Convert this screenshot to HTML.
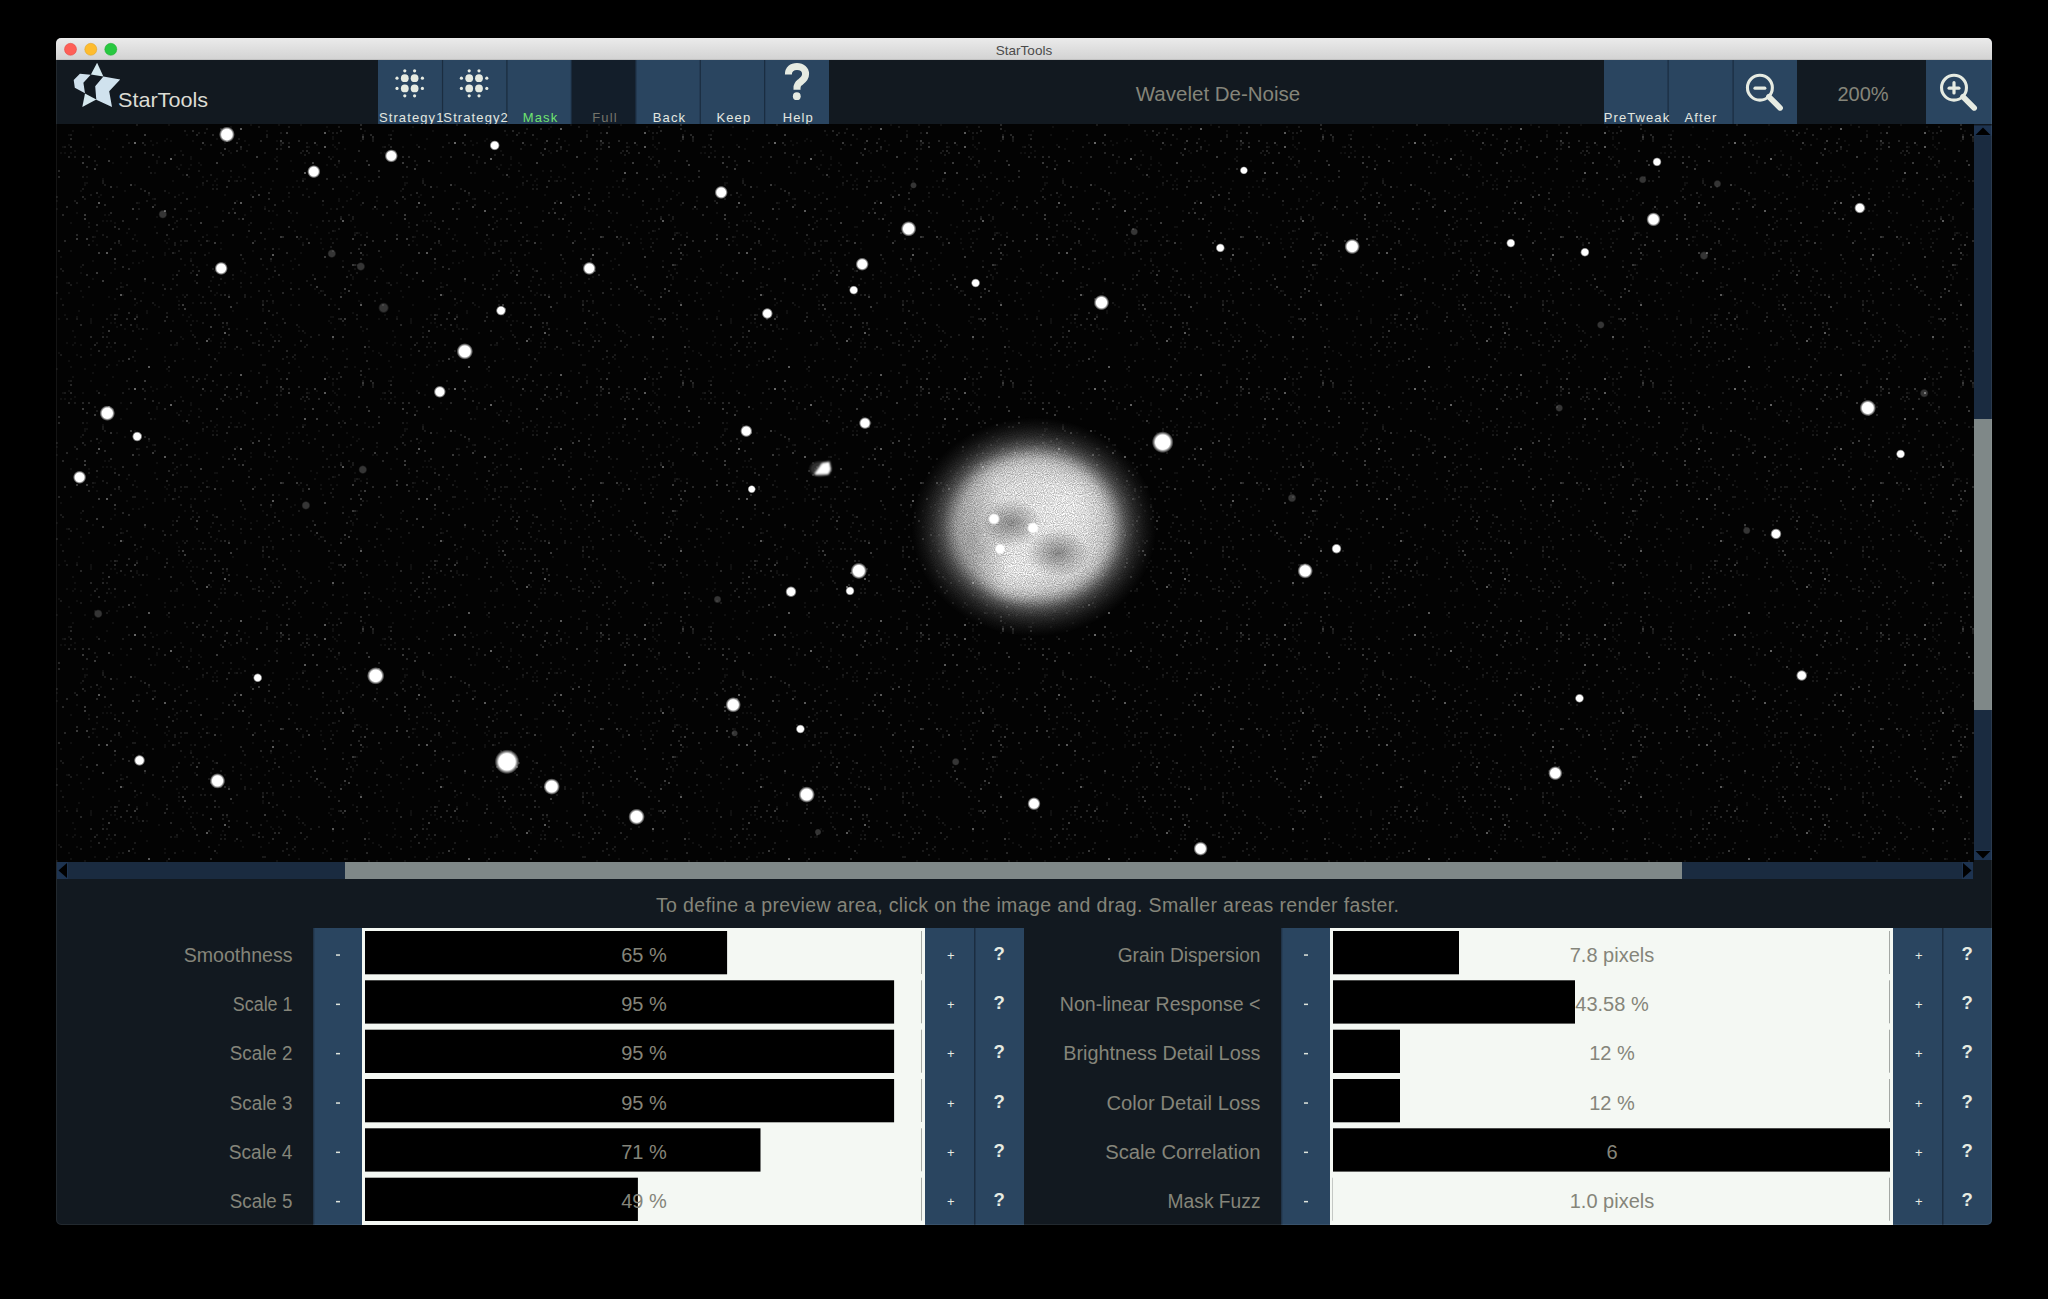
<!DOCTYPE html>
<html><head><meta charset="utf-8">
<style>
html,body{margin:0;padding:0;background:#000;width:2048px;height:1299px;overflow:hidden;}
svg{display:block;font-family:"Liberation Sans",sans-serif;}
</style></head><body>
<svg width="2048" height="1299" viewBox="0 0 2048 1299">
<defs>
<clipPath id="wc"><rect x="56" y="38" width="1936" height="1187" rx="5" ry="5"/></clipPath>
<clipPath id="ic"><rect x="56" y="124" width="1918" height="738"/></clipPath>
<linearGradient id="tg" x1="0" y1="0" x2="0" y2="1"><stop offset="0" stop-color="#ebebeb"/><stop offset="1" stop-color="#d2d2d2"/></linearGradient>
<radialGradient id="neb" cx="0.5" cy="0.5" r="0.5">
<stop offset="0" stop-color="#e4e4e4"/>
<stop offset="0.42" stop-color="#dcdcdc"/>
<stop offset="0.55" stop-color="#cccccc"/>
<stop offset="0.62" stop-color="#bcbcbc" stop-opacity="0.96"/>
<stop offset="0.68" stop-color="#a8a8a8" stop-opacity="0.8"/>
<stop offset="0.75" stop-color="#949494" stop-opacity="0.52"/>
<stop offset="0.83" stop-color="#808080" stop-opacity="0.3"/>
<stop offset="0.91" stop-color="#707070" stop-opacity="0.14"/>
<stop offset="1" stop-color="#606060" stop-opacity="0"/>
</radialGradient>
<radialGradient id="halo" cx="0.5" cy="0.5" r="0.5"><stop offset="0.6" stop-color="#fff" stop-opacity="0.2"/><stop offset="1" stop-color="#fff" stop-opacity="0"/></radialGradient>
<radialGradient id="eye" cx="0.5" cy="0.5" r="0.5">
<stop offset="0" stop-color="#000" stop-opacity="0.38"/>
<stop offset="1" stop-color="#000" stop-opacity="0"/>
</radialGradient>
<radialGradient id="hot" cx="0.5" cy="0.5" r="0.5">
<stop offset="0" stop-color="#fff" stop-opacity="0.35"/>
<stop offset="1" stop-color="#fff" stop-opacity="0"/>
</radialGradient>
<filter id="grain" x="0" y="0" width="100%" height="100%" color-interpolation-filters="sRGB">
<feTurbulence type="fractalNoise" baseFrequency="0.9" numOctaves="1" seed="7" result="n"/>
<feComponentTransfer in="n" result="nc"><feFuncR type="linear" slope="2.2" intercept="-0.6"/></feComponentTransfer>
<feColorMatrix in="nc" type="matrix" values="1 0 0 0 0  1 0 0 0 0  1 0 0 0 0  0 0 0 0 1" result="g"/>
<feComposite in="SourceGraphic" in2="g" operator="arithmetic" k1="0.38" k2="0.78" k3="0" k4="0"/>
</filter>
<filter id="bl" x="-20%" y="-20%" width="140%" height="140%"><feGaussianBlur stdDeviation="0.9"/></filter>
<filter id="speck" x="0" y="0" width="100%" height="100%" color-interpolation-filters="sRGB">
<feTurbulence type="fractalNoise" baseFrequency="0.5" numOctaves="1" seed="11" result="n"/>
<feColorMatrix in="n" type="matrix" values="0 0 0 0 1  0 0 0 0 1  0 0 0 0 1  9 0 0 0 -5.5"/>
</filter>
<radialGradient id="st" cx="0.5" cy="0.5" r="0.5">
<stop offset="0" stop-color="#fff"/>
<stop offset="0.66" stop-color="#fff"/>
<stop offset="0.82" stop-color="#fff" stop-opacity="0.5"/>
<stop offset="1" stop-color="#fff" stop-opacity="0"/>
</radialGradient>
</defs>
<rect x="0" y="0" width="2048" height="1299" fill="#000"/>
<g clip-path="url(#wc)">
<rect x="56" y="38" width="1936" height="1187" fill="#121920"/>

<rect x="56" y="38" width="1936" height="22" fill="url(#tg)"/>
<rect x="56" y="59.5" width="1936" height="0.5" fill="#b0b0b0"/>
<circle cx="70.5" cy="49.3" r="6" fill="#fe5f57" stroke="#e1453f" stroke-width="0.5"/>
<circle cx="90.8" cy="49.3" r="6" fill="#febc2e" stroke="#dfa023" stroke-width="0.5"/>
<circle cx="110.8" cy="49.3" r="6" fill="#28c840" stroke="#1dac2c" stroke-width="0.5"/>
<text x="1024" y="54.5" font-size="13.5" fill="#4b4b4b" text-anchor="middle">StarTools</text>
<rect x="56" y="60" width="1936" height="64" fill="#121920"/>
<polygon points="97.1,62.7 103.4,76.4 90.9,74.6" fill="#d5e8ee"/>
<polygon points="73.7,79.9 79.9,73.7 90.7,74.7 83.4,82.7 85,93.2 74.8,87.7" fill="#cfe0ec"/>
<polygon points="103.4,76.6 120.2,79.5 109.2,91.25 112,106.9 96.3,99.8 95.2,86.2" fill="#d0e2ee"/>
<polygon points="85,93.4 96.3,99.6 82.3,106.9" fill="#d5e8ee"/>
<text x="118" y="106.5" font-size="21" fill="#dcdcd4" textLength="90" lengthAdjust="spacingAndGlyphs">StarTools</text>
<rect x="378.00" y="60" width="64.43" height="64" fill="#2a4560"/>
<rect x="442.43" y="60" width="64.43" height="64" fill="#2a4560"/>
<rect x="506.86" y="60" width="64.43" height="64" fill="#2a4560"/>
<rect x="571.29" y="60" width="64.43" height="64" fill="#131e2a"/>
<rect x="635.72" y="60" width="64.43" height="64" fill="#2a4560"/>
<rect x="700.15" y="60" width="64.43" height="64" fill="#2a4560"/>
<rect x="764.58" y="60" width="64.43" height="64" fill="#2a4560"/>
<rect x="441.93" y="60" width="1.2" height="64" fill="#1b2d40"/>
<rect x="506.36" y="60" width="1.2" height="64" fill="#1b2d40"/>
<rect x="570.79" y="60" width="1.2" height="64" fill="#1b2d40"/>
<rect x="635.22" y="60" width="1.2" height="64" fill="#1b2d40"/>
<rect x="699.65" y="60" width="1.2" height="64" fill="#1b2d40"/>
<rect x="764.08" y="60" width="1.2" height="64" fill="#1b2d40"/>
<text x="411.72" y="122" font-size="13" fill="#e4e8e0" text-anchor="middle" letter-spacing="1.1">Strategy1</text>
<text x="476.14" y="122" font-size="13" fill="#e4e8e0" text-anchor="middle" letter-spacing="1.1">Strategy2</text>
<text x="540.58" y="122" font-size="13" fill="#6fe46f" text-anchor="middle" letter-spacing="1.1">Mask</text>
<text x="605.00" y="122" font-size="13" fill="#74746a" text-anchor="middle" letter-spacing="1.1">Full</text>
<text x="669.44" y="122" font-size="13" fill="#e4e8e0" text-anchor="middle" letter-spacing="1.1">Back</text>
<text x="733.87" y="122" font-size="13" fill="#e4e8e0" text-anchor="middle" letter-spacing="1.1">Keep</text>
<text x="798.30" y="122" font-size="13" fill="#e4e8e0" text-anchor="middle" letter-spacing="1.1">Help</text>
<circle cx="404.80" cy="78.20" r="3.9" fill="#e6ebe2"/><circle cx="404.80" cy="88.40" r="3.9" fill="#e6ebe2"/><circle cx="414.60" cy="78.20" r="3.9" fill="#e6ebe2"/><circle cx="414.60" cy="88.40" r="3.9" fill="#e6ebe2"/><circle cx="397.00" cy="78.20" r="1.6" fill="#e6ebe2"/><circle cx="397.00" cy="88.40" r="1.6" fill="#e6ebe2"/><circle cx="422.40" cy="78.20" r="1.6" fill="#e6ebe2"/><circle cx="422.40" cy="88.40" r="1.6" fill="#e6ebe2"/><circle cx="404.80" cy="70.80" r="1.6" fill="#e6ebe2"/><circle cx="404.80" cy="95.80" r="1.6" fill="#e6ebe2"/><circle cx="414.60" cy="70.80" r="1.6" fill="#e6ebe2"/><circle cx="414.60" cy="95.80" r="1.6" fill="#e6ebe2"/>
<circle cx="469.20" cy="78.20" r="3.9" fill="#e6ebe2"/><circle cx="469.20" cy="88.40" r="3.9" fill="#e6ebe2"/><circle cx="479.00" cy="78.20" r="3.9" fill="#e6ebe2"/><circle cx="479.00" cy="88.40" r="3.9" fill="#e6ebe2"/><circle cx="461.40" cy="78.20" r="1.6" fill="#e6ebe2"/><circle cx="461.40" cy="88.40" r="1.6" fill="#e6ebe2"/><circle cx="486.80" cy="78.20" r="1.6" fill="#e6ebe2"/><circle cx="486.80" cy="88.40" r="1.6" fill="#e6ebe2"/><circle cx="469.20" cy="70.80" r="1.6" fill="#e6ebe2"/><circle cx="469.20" cy="95.80" r="1.6" fill="#e6ebe2"/><circle cx="479.00" cy="70.80" r="1.6" fill="#e6ebe2"/><circle cx="479.00" cy="95.80" r="1.6" fill="#e6ebe2"/>
<path d="M788.4,74.5 C788.4,69 792,66.4 797,66.4 C802,66.4 805.6,69.5 805.6,74 C805.6,78.5 802.5,80.5 800,82.3 C797.8,84 797,85.5 797,88 L797,89.8" fill="none" stroke="#e6ebe2" stroke-width="7"/>
<circle cx="796.8" cy="96.2" r="3.9" fill="#e6ebe2"/>
<text x="1218" y="100.8" font-size="20.5" fill="#85857a" text-anchor="middle">Wavelet De-Noise</text>
<rect x="1604" y="60" width="64" height="64" fill="#2a4560"/>
<rect x="1668" y="60" width="65" height="64" fill="#2a4560"/>
<rect x="1733" y="60" width="64" height="64" fill="#2a4560"/>
<rect x="1797" y="60" width="129" height="64" fill="#121a22"/>
<rect x="1926" y="60" width="66" height="64" fill="#2a4560"/>
<rect x="1667.5" y="60" width="1.2" height="64" fill="#1b2d40"/>
<rect x="1732.5" y="60" width="1.2" height="64" fill="#1b2d40"/>
<text x="1637" y="122" font-size="13" fill="#e4e8e0" text-anchor="middle" letter-spacing="1.1">PreTweak</text>
<text x="1701" y="122" font-size="13" fill="#e4e8e0" text-anchor="middle" letter-spacing="1.1">After</text>
<text x="1863" y="101" font-size="20" fill="#85857a" text-anchor="middle">200%</text>
<circle cx="1759.9" cy="87.7" r="12.45" fill="none" stroke="#e6ebe2" stroke-width="3.1"/><line x1="1768.9" y1="96.7" x2="1780.1000000000001" y2="107.9" stroke="#e6ebe2" stroke-width="5.6" stroke-linecap="round"/><line x1="1755.0" y1="88.2" x2="1764.8000000000002" y2="88.2" stroke="#e6ebe2" stroke-width="3.2" stroke-linecap="round"/>
<circle cx="1954" cy="87.7" r="12.45" fill="none" stroke="#e6ebe2" stroke-width="3.1"/><line x1="1963" y1="96.7" x2="1974.2" y2="107.9" stroke="#e6ebe2" stroke-width="5.6" stroke-linecap="round"/><line x1="1949.1" y1="88.2" x2="1958.9" y2="88.2" stroke="#e6ebe2" stroke-width="3.2" stroke-linecap="round"/><line x1="1954" y1="82.7" x2="1954" y2="92.9" stroke="#e6ebe2" stroke-width="3.2" stroke-linecap="round"/>
<rect x="56" y="124" width="1918" height="738" fill="#030303"/>
<g clip-path="url(#ic)">
<g filter="url(#grain)">
<ellipse cx="1034" cy="527" rx="123" ry="110" fill="url(#neb)"/>
<ellipse cx="1068" cy="505" rx="40" ry="35" fill="url(#hot)"/>
<ellipse cx="1015" cy="570" rx="40" ry="35" fill="url(#hot)"/>
<ellipse cx="1012" cy="523" rx="30" ry="24" fill="url(#eye)"/>
<ellipse cx="972" cy="540" rx="40" ry="75" fill="url(#eye)" opacity="0.55"/>
<ellipse cx="1058" cy="553" rx="32" ry="24" fill="url(#eye)"/>
</g>
<defs><pattern id="nzp" x="56" y="124" width="320" height="246" patternUnits="userSpaceOnUse"><path fill="#fff" fill-opacity="0.05" d="M56 6h2v2h-2zM140 62h2v2h-2zM114 34h2v2h-2zM52 172h2v2h-2zM278 22h2v2h-2zM302 108h2v2h-2zM16 6h2v2h-2zM46 54h2v2h-2zM118 128h2v2h-2zM308 6h2v2h-2zM286 50h2v2h-2zM278 106h2v2h-2zM112 114h2v2h-2zM300 70h2v2h-2zM2 194h2v2h-2zM80 178h2v2h-2zM216 86h2v2h-2zM142 38h2v2h-2zM110 244h2v2h-2zM172 26h2v2h-2zM46 96h2v2h-2zM48 90h2v2h-2zM176 154h2v2h-2zM134 206h2v2h-2zM22 186h2v2h-2zM234 136h2v2h-2zM62 236h2v2h-2zM192 20h2v2h-2zM282 74h2v2h-2zM316 226h2v2h-2zM184 146h2v2h-2zM98 180h2v2h-2zM34 10h2v2h-2zM116 196h2v2h-2zM148 20h2v2h-2zM118 220h2v2h-2zM50 96h2v2h-2zM142 116h2v2h-2zM186 40h2v2h-2zM188 90h2v2h-2zM106 170h2v2h-2zM136 178h2v2h-2zM36 154h2v2h-2zM86 136h2v2h-2zM124 40h2v2h-2zM236 96h2v2h-2zM138 236h2v2h-2zM284 56h2v2h-2zM166 214h2v2h-2zM28 58h2v2h-2zM16 206h2v2h-2zM160 102h2v2h-2zM136 16h2v2h-2zM108 232h2v2h-2zM290 224h2v2h-2zM160 54h2v2h-2zM254 100h2v2h-2zM234 36h2v2h-2zM134 34h2v2h-2zM126 190h2v2h-2zM286 136h2v2h-2zM134 190h2v2h-2zM298 108h2v2h-2zM298 102h2v2h-2zM184 56h2v2h-2zM70 130h2v2h-2zM252 22h2v2h-2zM24 220h2v2h-2zM56 38h2v2h-2zM80 202h2v2h-2zM216 152h2v2h-2zM32 98h2v2h-2zM194 152h2v2h-2zM238 134h2v2h-2zM128 140h2v2h-2zM4 174h2v2h-2zM58 174h2v2h-2zM274 192h2v2h-2zM136 196h2v2h-2zM174 28h2v2h-2zM150 110h2v2h-2zM80 116h2v2h-2zM0 244h2v2h-2zM134 128h2v2h-2zM90 128h2v2h-2zM54 222h2v2h-2zM152 214h2v2h-2zM258 154h2v2h-2zM100 38h2v2h-2zM190 194h2v2h-2zM82 138h2v2h-2zM270 234h2v2h-2zM0 152h2v2h-2zM164 124h2v2h-2zM8 28h2v2h-2zM184 224h2v2h-2zM156 60h2v2h-2zM28 60h2v2h-2zM290 242h2v2h-2zM40 20h2v2h-2zM248 208h2v2h-2zM34 194h2v2h-2zM272 196h2v2h-2zM64 32h2v2h-2zM242 242h2v2h-2zM280 42h2v2h-2zM134 134h2v2h-2zM310 108h2v2h-2zM108 236h2v2h-2zM276 192h2v2h-2zM102 182h2v2h-2zM158 102h2v2h-2zM190 112h2v2h-2zM264 114h2v2h-2zM60 62h2v2h-2zM114 16h2v2h-2zM172 4h2v2h-2zM300 140h2v2h-2zM116 150h2v2h-2zM112 0h2v2h-2zM36 180h2v2h-2zM30 58h2v2h-2zM34 230h2v2h-2zM16 220h2v2h-2zM168 18h2v2h-2zM262 60h2v2h-2zM142 170h2v2h-2zM248 54h2v2h-2zM276 32h2v2h-2zM292 146h2v2h-2zM242 62h2v2h-2zM242 206h2v2h-2zM208 48h2v2h-2zM48 24h2v2h-2zM220 90h2v2h-2zM216 104h2v2h-2zM238 220h2v2h-2zM26 172h2v2h-2zM50 14h2v2h-2zM206 186h2v2h-2zM172 204h2v2h-2zM54 62h2v2h-2zM98 48h2v2h-2zM274 114h2v2h-2zM70 108h2v2h-2zM92 70h2v2h-2zM236 62h2v2h-2zM38 112h2v2h-2zM280 24h2v2h-2zM24 166h2v2h-2zM276 214h2v2h-2zM6 22h2v2h-2zM120 42h2v2h-2zM208 124h2v2h-2zM246 54h2v2h-2zM204 230h2v2h-2zM30 42h2v2h-2zM194 0h2v2h-2zM198 66h2v2h-2zM232 72h2v2h-2zM216 178h2v2h-2zM284 168h2v2h-2zM248 38h2v2h-2zM96 74h2v2h-2zM110 14h2v2h-2zM296 188h2v2h-2zM276 14h2v2h-2zM160 14h2v2h-2zM24 148h2v2h-2zM244 128h2v2h-2zM270 40h2v2h-2zM28 244h2v2h-2zM260 20h2v2h-2zM94 16h2v2h-2zM304 16h2v2h-2zM120 102h2v2h-2zM60 240h2v2h-2zM290 62h2v2h-2zM296 152h2v2h-2zM20 158h2v2h-2zM40 106h2v2h-2zM298 144h2v2h-2zM266 80h2v2h-2zM132 52h2v2h-2zM160 60h2v2h-2zM134 100h2v2h-2zM66 170h2v2h-2zM152 116h2v2h-2zM160 236h2v2h-2zM36 2h2v2h-2zM234 158h2v2h-2zM288 24h2v2h-2zM36 136h2v2h-2zM108 128h2v2h-2zM134 32h2v2h-2zM178 224h2v2h-2zM34 224h2v2h-2zM124 94h2v2h-2zM144 40h2v2h-2zM224 212h2v2h-2zM278 180h2v2h-2zM154 156h2v2h-2zM270 2h2v2h-2zM282 76h2v2h-2zM52 240h2v2h-2zM68 66h2v2h-2zM58 226h2v2h-2zM54 190h2v2h-2zM282 38h2v2h-2zM138 72h2v2h-2zM308 52h2v2h-2zM174 52h2v2h-2zM134 128h2v2h-2zM250 64h2v2h-2zM26 22h2v2h-2zM216 212h2v2h-2zM140 10h2v2h-2zM0 84h2v2h-2zM66 162h2v2h-2zM134 40h2v2h-2zM226 140h2v2h-2zM218 142h2v2h-2zM4 28h2v2h-2zM38 240h2v2h-2zM76 138h2v2h-2zM18 212h2v2h-2zM188 148h2v2h-2zM282 36h2v2h-2zM220 32h2v2h-2zM20 78h2v2h-2zM186 230h2v2h-2zM20 230h2v2h-2zM182 52h2v2h-2zM126 170h2v2h-2zM52 90h2v2h-2zM286 226h2v2h-2zM208 158h2v2h-2zM78 236h2v2h-2zM120 220h2v2h-2zM82 204h2v2h-2zM90 224h2v2h-2zM210 6h2v2h-2zM90 188h2v2h-2zM170 200h2v2h-2zM210 204h2v2h-2zM126 68h2v2h-2zM80 200h2v2h-2zM54 96h2v2h-2zM18 218h2v2h-2zM240 56h2v2h-2zM102 208h2v2h-2zM234 88h2v2h-2zM156 210h2v2h-2zM116 56h2v2h-2zM12 168h2v2h-2zM98 102h2v2h-2zM168 70h2v2h-2zM34 196h2v2h-2zM142 88h2v2h-2zM260 102h2v2h-2zM274 84h2v2h-2zM14 28h2v2h-2zM132 44h2v2h-2zM296 66h2v2h-2zM18 26h2v2h-2zM304 110h2v2h-2zM176 186h2v2h-2zM160 110h2v2h-2zM310 130h2v2h-2zM58 98h2v2h-2zM294 48h2v2h-2zM130 10h2v2h-2zM222 0h2v2h-2zM266 236h2v2h-2zM274 174h2v2h-2zM100 92h2v2h-2zM220 16h2v2h-2zM168 158h2v2h-2zM160 168h2v2h-2zM62 184h2v2h-2zM152 128h2v2h-2zM158 170h2v2h-2zM208 82h2v2h-2zM206 178h2v2h-2zM150 140h2v2h-2zM64 48h2v2h-2zM214 170h2v2h-2zM194 172h2v2h-2zM88 156h2v2h-2zM290 76h2v2h-2zM206 140h2v2h-2zM0 76h2v2h-2zM146 52h2v2h-2zM220 200h2v2h-2zM296 154h2v2h-2zM164 118h2v2h-2zM226 112h2v2h-2zM108 130h2v2h-2zM242 202h2v2h-2zM86 168h2v2h-2zM42 72h2v2h-2zM262 168h2v2h-2zM316 84h2v2h-2zM46 208h2v2h-2zM120 172h2v2h-2zM158 56h2v2h-2zM100 36h2v2h-2zM12 10h2v2h-2zM124 120h2v2h-2zM312 216h2v2h-2zM36 116h2v2h-2zM212 226h2v2h-2zM294 48h2v2h-2zM196 126h2v2h-2zM204 62h2v2h-2zM74 166h2v2h-2zM2 228h2v2h-2zM54 198h2v2h-2zM216 56h2v2h-2zM90 204h2v2h-2zM264 118h2v2h-2zM24 142h2v2h-2zM126 234h2v2h-2zM62 116h2v2h-2zM68 204h2v2h-2zM236 170h2v2h-2zM270 142h2v2h-2zM304 80h2v2h-2zM226 156h2v2h-2zM258 108h2v2h-2zM280 114h2v2h-2zM80 190h2v2h-2zM242 114h2v2h-2zM132 192h2v2h-2zM126 214h2v2h-2zM140 196h2v2h-2zM266 124h2v2h-2zM122 70h2v2h-2zM224 18h2v2h-2zM146 60h2v2h-2zM138 84h2v2h-2zM162 228h2v2h-2zM276 20h2v2h-2zM70 38h2v2h-2zM118 98h2v2h-2zM78 180h2v2h-2zM108 16h2v2h-2zM212 104h2v2h-2zM168 138h2v2h-2zM238 106h2v2h-2zM30 52h2v2h-2zM214 98h2v2h-2zM298 242h2v2h-2zM10 218h2v2h-2zM294 96h2v2h-2zM244 0h2v2h-2zM180 76h2v2h-2zM198 218h2v2h-2zM214 136h2v2h-2zM278 204h2v2h-2zM308 228h2v2h-2zM112 124h2v2h-2zM112 68h2v2h-2zM222 124h2v2h-2zM14 98h2v2h-2zM172 170h2v2h-2zM206 184h2v2h-2zM84 214h2v2h-2zM238 234h2v2h-2zM64 158h2v2h-2zM272 6h2v2h-2zM200 150h2v2h-2zM288 168h2v2h-2zM12 20h2v2h-2zM218 34h2v2h-2zM236 46h2v2h-2zM24 66h2v2h-2zM194 82h2v2h-2zM108 116h2v2h-2zM166 86h2v2h-2zM194 70h2v2h-2zM214 64h2v2h-2zM40 120h2v2h-2zM8 190h2v2h-2zM276 12h2v2h-2zM178 56h2v2h-2zM34 198h2v2h-2zM20 192h2v2h-2zM14 242h2v2h-2zM126 50h2v2h-2zM10 158h2v2h-2zM78 60h2v2h-2zM64 120h2v2h-2zM58 144h2v2h-2zM110 118h2v2h-2zM130 196h2v2h-2zM188 42h2v2h-2zM310 154h2v2h-2zM58 198h2v2h-2zM82 78h2v2h-2zM54 148h2v2h-2zM12 236h2v2h-2zM158 146h2v2h-2zM192 100h2v2h-2zM100 18h2v2h-2zM302 176h2v2h-2zM124 26h2v2h-2zM154 216h2v2h-2zM306 206h2v2h-2zM60 202h2v2h-2zM288 200h2v2h-2zM20 88h2v2h-2zM272 108h2v2h-2zM188 16h2v2h-2zM258 164h2v2h-2zM174 2h2v2h-2zM214 210h2v2h-2zM250 26h2v2h-2zM220 244h2v2h-2zM184 162h2v2h-2zM234 180h2v2h-2zM78 110h2v2h-2zM90 186h2v2h-2zM266 166h2v2h-2zM138 156h2v2h-2zM274 198h2v2h-2zM246 118h2v2h-2zM222 210h2v2h-2zM302 68h2v2h-2zM164 218h2v2h-2zM124 212h2v2h-2zM44 70h2v2h-2zM230 62h2v2h-2zM236 144h2v2h-2zM312 170h2v2h-2zM194 86h2v2h-2zM14 126h2v2h-2zM166 46h2v2h-2zM248 54h2v2h-2zM180 204h2v2h-2zM132 86h2v2h-2zM142 224h2v2h-2zM304 178h2v2h-2zM140 142h2v2h-2zM4 132h2v2h-2zM96 20h2v2h-2zM122 184h2v2h-2zM208 124h2v2h-2zM284 194h2v2h-2zM122 176h2v2h-2z"/><path fill="#fff" fill-opacity="0.09" d="M242 164h2v2h-2zM250 114h2v2h-2zM8 22h2v2h-2zM150 56h2v2h-2zM206 176h2v2h-2zM124 78h2v2h-2zM296 94h2v2h-2zM242 140h2v2h-2zM270 88h2v2h-2zM216 190h2v2h-2zM280 84h2v2h-2zM180 178h2v2h-2zM232 68h2v2h-2zM156 64h2v2h-2zM118 30h2v2h-2zM98 80h2v2h-2zM60 190h2v2h-2zM274 242h2v2h-2zM94 48h2v2h-2zM110 188h2v2h-2zM246 70h2v2h-2zM300 194h2v2h-2zM268 152h2v2h-2zM144 24h2v2h-2zM98 74h2v2h-2zM116 92h2v2h-2zM90 76h2v2h-2zM6 180h2v2h-2zM272 32h2v2h-2zM140 10h2v2h-2zM26 140h2v2h-2zM148 178h2v2h-2zM64 162h2v2h-2zM250 26h2v2h-2zM6 146h2v2h-2zM144 120h2v2h-2zM244 112h2v2h-2zM174 46h2v2h-2zM26 64h2v2h-2zM244 28h2v2h-2zM32 102h2v2h-2zM250 18h2v2h-2zM294 160h2v2h-2zM26 38h2v2h-2zM76 206h2v2h-2zM288 242h2v2h-2zM154 20h2v2h-2zM126 30h2v2h-2zM284 194h2v2h-2zM212 154h2v2h-2zM304 202h2v2h-2zM316 56h2v2h-2zM266 96h2v2h-2zM230 232h2v2h-2zM226 76h2v2h-2zM300 108h2v2h-2zM156 144h2v2h-2zM316 14h2v2h-2zM312 244h2v2h-2zM50 242h2v2h-2zM106 160h2v2h-2zM108 66h2v2h-2zM40 40h2v2h-2zM122 44h2v2h-2zM282 18h2v2h-2zM80 0h2v2h-2zM208 114h2v2h-2zM304 120h2v2h-2zM148 8h2v2h-2zM118 72h2v2h-2zM144 178h2v2h-2zM232 18h2v2h-2zM118 236h2v2h-2zM134 200h2v2h-2zM300 168h2v2h-2zM100 108h2v2h-2zM58 138h2v2h-2zM114 164h2v2h-2zM76 232h2v2h-2zM136 210h2v2h-2zM72 18h2v2h-2zM30 42h2v2h-2zM156 152h2v2h-2zM290 234h2v2h-2zM146 112h2v2h-2zM62 118h2v2h-2zM154 178h2v2h-2zM206 240h2v2h-2zM138 128h2v2h-2zM276 126h2v2h-2zM224 20h2v2h-2zM306 10h2v2h-2zM220 188h2v2h-2zM164 154h2v2h-2zM128 6h2v2h-2zM46 58h2v2h-2zM294 150h2v2h-2zM10 194h2v2h-2zM136 146h2v2h-2zM20 194h2v2h-2zM88 120h2v2h-2zM264 166h2v2h-2zM226 234h2v2h-2zM142 46h2v2h-2zM298 110h2v2h-2zM250 22h2v2h-2zM240 88h2v2h-2zM208 84h2v2h-2zM164 170h2v2h-2zM52 218h2v2h-2zM82 84h2v2h-2zM210 176h2v2h-2zM252 72h2v2h-2zM204 208h2v2h-2zM280 8h2v2h-2zM232 22h2v2h-2zM160 64h2v2h-2zM164 28h2v2h-2zM206 220h2v2h-2zM262 210h2v2h-2zM0 168h2v2h-2zM276 118h2v2h-2zM210 12h2v2h-2zM96 132h2v2h-2zM184 158h2v2h-2zM254 160h2v2h-2zM226 194h2v2h-2zM26 52h2v2h-2zM136 140h2v2h-2zM66 236h2v2h-2zM146 112h2v2h-2zM248 30h2v2h-2zM14 160h2v2h-2zM310 204h2v2h-2zM122 180h2v2h-2zM80 78h2v2h-2zM282 2h2v2h-2zM282 104h2v2h-2zM46 56h2v2h-2zM58 118h2v2h-2zM60 164h2v2h-2zM78 126h2v2h-2zM148 130h2v2h-2zM138 106h2v2h-2zM246 120h2v2h-2zM124 116h2v2h-2zM282 36h2v2h-2zM196 48h2v2h-2zM306 130h2v2h-2zM68 220h2v2h-2zM34 70h2v2h-2zM212 86h2v2h-2zM258 68h2v2h-2zM0 72h2v2h-2zM152 214h2v2h-2zM300 148h2v2h-2zM250 220h2v2h-2zM76 114h2v2h-2zM274 122h2v2h-2zM176 84h2v2h-2zM282 194h2v2h-2zM278 96h2v2h-2zM232 238h2v2h-2zM164 222h2v2h-2zM96 178h2v2h-2zM122 146h2v2h-2zM196 58h2v2h-2zM210 10h2v2h-2zM162 190h2v2h-2zM242 180h2v2h-2zM194 98h2v2h-2zM76 126h2v2h-2zM18 32h2v2h-2zM256 150h2v2h-2zM168 222h2v2h-2zM50 222h2v2h-2zM224 24h2v2h-2zM268 232h2v2h-2zM232 2h2v2h-2zM72 104h2v2h-2zM78 18h2v2h-2zM240 200h2v2h-2zM134 86h2v2h-2zM318 176h2v2h-2zM202 166h2v2h-2zM40 218h2v2h-2zM168 218h2v2h-2zM272 96h2v2h-2zM162 160h2v2h-2zM248 222h2v2h-2zM276 8h2v2h-2zM316 16h2v2h-2zM120 160h2v2h-2zM146 58h2v2h-2zM46 110h2v2h-2zM50 194h2v2h-2zM50 112h2v2h-2zM84 176h2v2h-2zM152 230h2v2h-2zM14 10h2v2h-2zM166 202h2v2h-2zM28 74h2v2h-2zM182 94h2v2h-2zM220 36h2v2h-2zM124 134h2v2h-2zM210 144h2v2h-2zM92 42h2v2h-2zM88 20h2v2h-2zM312 222h2v2h-2zM194 158h2v2h-2zM122 126h2v2h-2zM298 36h2v2h-2zM118 118h2v2h-2zM130 116h2v2h-2zM130 170h2v2h-2zM4 230h2v2h-2zM238 230h2v2h-2zM146 172h2v2h-2zM278 40h2v2h-2zM36 112h2v2h-2zM176 150h2v2h-2zM152 162h2v2h-2zM216 176h2v2h-2zM128 116h2v2h-2zM154 50h2v2h-2zM196 218h2v2h-2zM246 26h2v2h-2zM120 96h2v2h-2zM292 90h2v2h-2zM294 74h2v2h-2zM150 4h2v2h-2zM202 70h2v2h-2zM4 144h2v2h-2zM24 232h2v2h-2zM310 190h2v2h-2zM254 212h2v2h-2zM146 198h2v2h-2zM116 154h2v2h-2zM180 56h2v2h-2zM96 158h2v2h-2zM128 172h2v2h-2zM70 160h2v2h-2zM48 230h2v2h-2zM20 78h2v2h-2zM224 8h2v2h-2zM296 92h2v2h-2zM66 22h2v2h-2zM150 82h2v2h-2zM212 44h2v2h-2zM102 32h2v2h-2zM276 224h2v2h-2zM186 134h2v2h-2zM256 232h2v2h-2zM138 212h2v2h-2zM84 64h2v2h-2zM246 206h2v2h-2zM150 190h2v2h-2zM172 204h2v2h-2zM58 118h2v2h-2zM38 36h2v2h-2zM114 220h2v2h-2zM202 216h2v2h-2zM284 92h2v2h-2zM46 202h2v2h-2zM202 2h2v2h-2zM134 136h2v2h-2zM62 116h2v2h-2zM188 172h2v2h-2zM134 148h2v2h-2zM194 210h2v2h-2zM190 26h2v2h-2zM118 120h2v2h-2zM12 158h2v2h-2zM286 82h2v2h-2zM312 56h2v2h-2zM32 162h2v2h-2zM236 232h2v2h-2zM154 166h2v2h-2zM208 28h2v2h-2zM70 10h2v2h-2zM18 76h2v2h-2zM252 28h2v2h-2zM48 60h2v2h-2zM274 34h2v2h-2zM198 116h2v2h-2zM188 170h2v2h-2zM276 106h2v2h-2zM300 190h2v2h-2zM78 226h2v2h-2zM212 166h2v2h-2zM50 212h2v2h-2zM250 156h2v2h-2zM208 240h2v2h-2zM142 8h2v2h-2zM188 54h2v2h-2zM226 112h2v2h-2zM120 218h2v2h-2zM184 24h2v2h-2zM188 138h2v2h-2zM182 14h2v2h-2z"/><path fill="#fff" fill-opacity="0.14" d="M202 70h2v2h-2zM96 30h2v2h-2zM232 22h2v2h-2zM108 164h2v2h-2zM304 4h2v2h-2zM24 200h2v2h-2zM170 62h2v2h-2zM64 200h2v2h-2zM288 52h2v2h-2zM34 212h2v2h-2zM282 52h2v2h-2zM300 54h2v2h-2zM118 84h2v2h-2zM74 200h2v2h-2zM304 0h2v2h-2zM140 218h2v2h-2zM74 32h2v2h-2zM276 64h2v2h-2zM88 28h2v2h-2zM12 32h2v2h-2zM6 90h2v2h-2zM120 150h2v2h-2zM164 4h2v2h-2zM88 66h2v2h-2zM26 32h2v2h-2zM214 134h2v2h-2zM58 190h2v2h-2zM32 120h2v2h-2zM228 198h2v2h-2zM184 130h2v2h-2zM302 26h2v2h-2zM230 128h2v2h-2zM112 242h2v2h-2zM314 10h2v2h-2zM266 76h2v2h-2zM234 164h2v2h-2zM14 14h2v2h-2zM244 216h2v2h-2zM204 108h2v2h-2zM54 124h2v2h-2zM226 18h2v2h-2zM40 82h2v2h-2zM310 36h2v2h-2zM32 32h2v2h-2zM140 158h2v2h-2zM298 140h2v2h-2zM166 96h2v2h-2zM304 134h2v2h-2zM150 116h2v2h-2zM258 154h2v2h-2zM220 24h2v2h-2zM58 218h2v2h-2zM282 184h2v2h-2zM110 110h2v2h-2zM230 226h2v2h-2zM116 104h2v2h-2zM172 210h2v2h-2zM232 102h2v2h-2zM212 186h2v2h-2zM48 80h2v2h-2zM218 80h2v2h-2zM130 94h2v2h-2zM78 174h2v2h-2zM242 16h2v2h-2zM46 212h2v2h-2zM42 22h2v2h-2zM220 24h2v2h-2zM190 206h2v2h-2zM66 142h2v2h-2zM30 150h2v2h-2zM286 142h2v2h-2zM168 170h2v2h-2zM62 104h2v2h-2zM180 222h2v2h-2zM216 222h2v2h-2zM26 72h2v2h-2zM306 78h2v2h-2zM180 26h2v2h-2zM294 128h2v2h-2zM108 38h2v2h-2zM246 56h2v2h-2zM54 88h2v2h-2zM284 94h2v2h-2zM58 194h2v2h-2zM142 146h2v2h-2zM114 206h2v2h-2zM218 216h2v2h-2zM286 196h2v2h-2zM318 156h2v2h-2zM284 6h2v2h-2zM310 236h2v2h-2zM136 6h2v2h-2zM92 68h2v2h-2zM158 234h2v2h-2zM172 88h2v2h-2zM2 46h2v2h-2zM72 144h2v2h-2zM204 16h2v2h-2zM72 188h2v2h-2zM14 22h2v2h-2zM270 54h2v2h-2zM192 106h2v2h-2zM232 86h2v2h-2zM80 94h2v2h-2zM158 184h2v2h-2zM166 198h2v2h-2zM290 152h2v2h-2zM42 226h2v2h-2zM26 38h2v2h-2zM80 192h2v2h-2zM316 12h2v2h-2zM40 68h2v2h-2zM226 168h2v2h-2zM216 124h2v2h-2zM310 112h2v2h-2zM212 68h2v2h-2zM110 192h2v2h-2zM262 28h2v2h-2zM176 110h2v2h-2zM56 72h2v2h-2zM302 124h2v2h-2zM268 170h2v2h-2zM156 10h2v2h-2zM112 100h2v2h-2zM306 14h2v2h-2zM2 52h2v2h-2zM154 242h2v2h-2zM108 196h2v2h-2zM70 194h2v2h-2zM130 74h2v2h-2zM166 30h2v2h-2zM2 126h2v2h-2zM220 44h2v2h-2zM66 96h2v2h-2zM272 180h2v2h-2zM116 128h2v2h-2zM286 212h2v2h-2zM180 18h2v2h-2zM202 220h2v2h-2zM20 110h2v2h-2zM8 116h2v2h-2zM38 220h2v2h-2zM160 146h2v2h-2zM218 146h2v2h-2zM206 180h2v2h-2zM212 74h2v2h-2zM58 102h2v2h-2zM10 82h2v2h-2zM86 204h2v2h-2zM316 116h2v2h-2zM184 22h2v2h-2zM222 216h2v2h-2zM54 62h2v2h-2zM222 150h2v2h-2zM204 134h2v2h-2zM40 100h2v2h-2zM158 190h2v2h-2zM172 56h2v2h-2zM170 198h2v2h-2zM86 18h2v2h-2z"/><path fill="#fff" fill-opacity="0.22" d="M260 162h2v2h-2zM58 134h2v2h-2zM260 48h2v2h-2zM178 88h2v2h-2zM74 60h2v2h-2zM52 36h2v2h-2zM130 50h2v2h-2zM88 154h2v2h-2zM78 194h2v2h-2zM38 44h2v2h-2zM252 118h2v2h-2zM288 194h2v2h-2zM296 114h2v2h-2zM288 164h2v2h-2zM318 82h2v2h-2zM160 38h2v2h-2zM224 16h2v2h-2zM240 112h2v2h-2zM154 202h2v2h-2zM140 150h2v2h-2zM28 90h2v2h-2zM258 18h2v2h-2zM158 118h2v2h-2zM230 8h2v2h-2zM28 94h2v2h-2zM146 18h2v2h-2zM46 156h2v2h-2zM304 128h2v2h-2zM196 118h2v2h-2zM296 140h2v2h-2zM20 114h2v2h-2zM292 166h2v2h-2zM96 82h2v2h-2zM308 120h2v2h-2zM256 38h2v2h-2zM30 114h2v2h-2zM52 206h2v2h-2zM174 182h2v2h-2zM42 128h2v2h-2zM88 10h2v2h-2zM126 180h2v2h-2zM224 112h2v2h-2zM268 132h2v2h-2zM312 40h2v2h-2zM186 94h2v2h-2zM144 98h2v2h-2zM208 198h2v2h-2zM172 172h2v2h-2zM306 12h2v2h-2zM170 16h2v2h-2zM168 24h2v2h-2zM284 172h2v2h-2zM196 72h2v2h-2zM128 184h2v2h-2zM308 222h2v2h-2zM76 84h2v2h-2zM40 148h2v2h-2zM72 234h2v2h-2zM178 78h2v2h-2zM200 32h2v2h-2z"/><path fill="#fff" fill-opacity="0.34" d="M304 180h2v2h-2zM42 78h2v2h-2zM286 96h2v2h-2zM168 208h2v2h-2zM64 170h2v2h-2zM268 22h2v2h-2zM216 130h2v2h-2zM184 4h2v2h-2zM184 78h2v2h-2zM92 242h2v2h-2zM108 86h2v2h-2zM248 48h2v2h-2zM114 34h2v2h-2zM78 18h2v2h-2zM150 216h2v2h-2zM50 128h2v2h-2zM276 212h2v2h-2zM268 8h2v2h-2z"/></pattern></defs>
<rect x="56" y="124" width="1918" height="738" fill="url(#nzp)"/>
<circle cx="383.6" cy="307.8" r="5.5" fill="url(#st)" fill-opacity="0.2"/>
<circle cx="162.8" cy="214.3" r="4.5" fill="url(#st)" fill-opacity="0.2"/>
<circle cx="331.8" cy="253.6" r="4.5" fill="url(#st)" fill-opacity="0.2"/>
<circle cx="360.8" cy="266.5" r="4.5" fill="url(#st)" fill-opacity="0.2"/>
<circle cx="362.8" cy="469.6" r="4.5" fill="url(#st)" fill-opacity="0.2"/>
<circle cx="913.5" cy="185.3" r="3.5" fill="url(#st)" fill-opacity="0.2"/>
<circle cx="1134.2" cy="231.7" r="4.0" fill="url(#st)" fill-opacity="0.2"/>
<circle cx="1642.7" cy="179.6" r="4.0" fill="url(#st)" fill-opacity="0.2"/>
<circle cx="1717.4" cy="183.8" r="4.0" fill="url(#st)" fill-opacity="0.2"/>
<circle cx="1924.2" cy="393.2" r="4.5" fill="url(#st)" fill-opacity="0.2"/>
<circle cx="1704" cy="255.6" r="4.5" fill="url(#st)" fill-opacity="0.2"/>
<circle cx="1559.2" cy="408" r="4.0" fill="url(#st)" fill-opacity="0.2"/>
<circle cx="98.2" cy="613.7" r="4.5" fill="url(#st)" fill-opacity="0.2"/>
<circle cx="305.9" cy="505.4" r="4.5" fill="url(#st)" fill-opacity="0.2"/>
<circle cx="717.5" cy="599.4" r="4.0" fill="url(#st)" fill-opacity="0.2"/>
<circle cx="955.7" cy="761.8" r="4.0" fill="url(#st)" fill-opacity="0.2"/>
<circle cx="818" cy="832" r="3.5" fill="url(#st)" fill-opacity="0.2"/>
<circle cx="734.6" cy="733.3" r="3.5" fill="url(#st)" fill-opacity="0.2"/>
<circle cx="1292" cy="498" r="4.5" fill="url(#st)" fill-opacity="0.2"/>
<circle cx="1746.7" cy="530.5" r="4.0" fill="url(#st)" fill-opacity="0.2"/>
<circle cx="1600.8" cy="324.9" r="4.0" fill="url(#st)" fill-opacity="0.2"/>
<circle cx="226.9" cy="134.5" r="8.0" fill="url(#st)"/>
<circle cx="313.8" cy="171.6" r="6.7" fill="url(#st)"/>
<circle cx="391.3" cy="155.9" r="6.7" fill="url(#st)"/>
<circle cx="494.7" cy="145.4" r="5.2" fill="url(#st)"/>
<circle cx="221.2" cy="268.4" r="6.7" fill="url(#st)"/>
<circle cx="501" cy="310.6" r="5.2" fill="url(#st)"/>
<circle cx="464.8" cy="351.4" r="8.3" fill="url(#st)"/>
<circle cx="439.8" cy="391.8" r="6.2" fill="url(#st)"/>
<circle cx="107.3" cy="413.2" r="7.8" fill="url(#st)"/>
<circle cx="137.2" cy="436.5" r="5.2" fill="url(#st)"/>
<circle cx="79.6" cy="477.3" r="6.7" fill="url(#st)"/>
<circle cx="721.2" cy="192.4" r="6.7" fill="url(#st)"/>
<circle cx="908.6" cy="228.8" r="7.8" fill="url(#st)"/>
<circle cx="589.3" cy="268.4" r="6.7" fill="url(#st)"/>
<circle cx="862.2" cy="264.2" r="6.7" fill="url(#st)"/>
<circle cx="853.7" cy="290.1" r="4.7" fill="url(#st)"/>
<circle cx="975.6" cy="283" r="4.7" fill="url(#st)"/>
<circle cx="767.3" cy="313.5" r="5.7" fill="url(#st)"/>
<circle cx="746.3" cy="431.1" r="6.2" fill="url(#st)"/>
<circle cx="865" cy="423.1" r="6.2" fill="url(#st)"/>
<circle cx="751.7" cy="489.2" r="4.2" fill="url(#st)"/>
<circle cx="1101.5" cy="302.6" r="7.8" fill="url(#st)"/>
<circle cx="1352.2" cy="246.5" r="7.8" fill="url(#st)"/>
<circle cx="1220.3" cy="247.9" r="4.7" fill="url(#st)"/>
<circle cx="1243.9" cy="170.4" r="4.2" fill="url(#st)"/>
<circle cx="1162.7" cy="442.2" r="10.9" fill="url(#st)"/>
<circle cx="1657" cy="161.9" r="4.7" fill="url(#st)"/>
<circle cx="1653.5" cy="219.4" r="7.2" fill="url(#st)"/>
<circle cx="1859.8" cy="208" r="5.7" fill="url(#st)"/>
<circle cx="1510.8" cy="243.1" r="4.7" fill="url(#st)"/>
<circle cx="1584.9" cy="252.2" r="4.7" fill="url(#st)"/>
<circle cx="1867.8" cy="408" r="8.3" fill="url(#st)"/>
<circle cx="1900.6" cy="454" r="4.7" fill="url(#st)"/>
<circle cx="375.7" cy="675.8" r="8.8" fill="url(#st)"/>
<circle cx="257.7" cy="677.8" r="4.7" fill="url(#st)"/>
<circle cx="139.5" cy="760.4" r="5.7" fill="url(#st)"/>
<circle cx="217.5" cy="780.9" r="7.8" fill="url(#st)"/>
<circle cx="507" cy="761.8" r="12.4" fill="url(#st)"/>
<circle cx="858.8" cy="570.9" r="8.3" fill="url(#st)"/>
<circle cx="791" cy="591.7" r="5.7" fill="url(#st)"/>
<circle cx="850" cy="590.9" r="4.7" fill="url(#st)"/>
<circle cx="733.2" cy="704.8" r="7.8" fill="url(#st)"/>
<circle cx="800.4" cy="729" r="4.7" fill="url(#st)"/>
<circle cx="551.7" cy="786.6" r="8.3" fill="url(#st)"/>
<circle cx="636.6" cy="816.8" r="8.3" fill="url(#st)"/>
<circle cx="806.7" cy="794.6" r="8.3" fill="url(#st)"/>
<circle cx="1305.2" cy="570.9" r="7.8" fill="url(#st)"/>
<circle cx="1336.5" cy="548.7" r="5.2" fill="url(#st)"/>
<circle cx="1034" cy="803.7" r="6.7" fill="url(#st)"/>
<circle cx="1200.6" cy="848.7" r="7.2" fill="url(#st)"/>
<circle cx="1776" cy="533.9" r="5.7" fill="url(#st)"/>
<circle cx="1801.7" cy="675.5" r="5.7" fill="url(#st)"/>
<circle cx="1579.5" cy="698.3" r="4.7" fill="url(#st)"/>
<circle cx="1555.3" cy="773.2" r="7.2" fill="url(#st)"/>
<circle cx="994" cy="519" r="6.2" fill="url(#st)"/>
<circle cx="1033" cy="528" r="6.2" fill="url(#st)"/>
<circle cx="1000" cy="549" r="5.7" fill="url(#st)"/>
<ellipse cx="820" cy="469" rx="12" ry="9" fill="url(#st)" fill-opacity="0.18"/>
<polygon points="814.5,473.5 822,463 829.5,461.5 831,469.5 828.5,474.5 815,474.8" fill="#fff" filter="url(#bl)"/>
</g>
<rect x="1974" y="124" width="18" height="736" fill="#1a2b40"/>
<rect x="1974" y="124" width="18" height="1.6" fill="#0f161e"/>
<rect x="1974" y="125.6" width="18" height="10" fill="#1d3350"/>
<rect x="1974" y="850" width="18" height="10" fill="#1d3350"/>
<rect x="1974" y="419" width="18" height="291" fill="#7f8888"/>
<polygon points="1975.5,135 1990.5,135 1983,127.5" fill="#000"/>
<polygon points="1975.5,851 1990.5,851 1983,858.5" fill="#000"/>
<rect x="57" y="862" width="1916" height="17" fill="#1a2b40"/>
<rect x="57" y="862" width="11" height="17" fill="#1d3350"/>
<rect x="1962" y="862" width="11" height="17" fill="#1d3350"/>
<rect x="345" y="862" width="1337" height="17" fill="#7f8888"/>
<polygon points="67,863 67,878 58.5,870.5" fill="#000"/>
<polygon points="1963,863 1963,878 1971.5,870.5" fill="#000"/>
<text x="1027.5" y="911.7" font-size="19.5" fill="#85857a" text-anchor="middle" textLength="743" lengthAdjust="spacing">To define a preview area, click on the image and drag. Smaller areas render faster.</text>
<rect x="313.5" y="928" width="48.5" height="297" fill="#2a4560"/>
<rect x="313.5" y="928" width="1" height="297" fill="#22384f"/>
<rect x="362" y="928" width="563" height="297" fill="#f4f8f3"/>
<rect x="925" y="928" width="99" height="297" fill="#2a4560"/>
<rect x="974" y="928" width="1.5" height="297" fill="#1b2d40"/>
<text x="183.7" y="961.7" font-size="20" fill="#85857a" textLength="108.8" lengthAdjust="spacingAndGlyphs">Smoothness</text>
<rect x="921" y="931.0" width="1" height="43" fill="#a4a8a4"/>
<rect x="365" y="931.0" width="362.1" height="43.3" fill="#000"/>
<text x="644" y="961.7" font-size="20" fill="#85857a" text-anchor="middle">65 %</text>
<rect x="336" y="954.3" width="4" height="1.5" fill="#dfe4dc"/>
<text x="950.7" y="959.5" font-size="13" fill="#e6ebe2" text-anchor="middle">+</text>
<text x="999.2" y="959.5" font-size="18.5" font-weight="bold" fill="#e6ebe2" text-anchor="middle">?</text>
<text x="232.8" y="1011.0" font-size="20" fill="#85857a" textLength="59.7" lengthAdjust="spacingAndGlyphs">Scale 1</text>
<rect x="921" y="980.3" width="1" height="43" fill="#a4a8a4"/>
<rect x="365" y="980.3" width="529.1" height="43.3" fill="#000"/>
<text x="644" y="1011.0" font-size="20" fill="#85857a" text-anchor="middle">95 %</text>
<rect x="336" y="1003.6" width="4" height="1.5" fill="#dfe4dc"/>
<text x="950.7" y="1008.8" font-size="13" fill="#e6ebe2" text-anchor="middle">+</text>
<text x="999.2" y="1008.8" font-size="18.5" font-weight="bold" fill="#e6ebe2" text-anchor="middle">?</text>
<text x="229.8" y="1060.3" font-size="20" fill="#85857a" textLength="62.7" lengthAdjust="spacingAndGlyphs">Scale 2</text>
<rect x="921" y="1029.7" width="1" height="43" fill="#a4a8a4"/>
<rect x="365" y="1029.7" width="529.1" height="43.3" fill="#000"/>
<text x="644" y="1060.3" font-size="20" fill="#85857a" text-anchor="middle">95 %</text>
<rect x="336" y="1052.9" width="4" height="1.5" fill="#dfe4dc"/>
<text x="950.7" y="1058.1" font-size="13" fill="#e6ebe2" text-anchor="middle">+</text>
<text x="999.2" y="1058.1" font-size="18.5" font-weight="bold" fill="#e6ebe2" text-anchor="middle">?</text>
<text x="229.8" y="1109.7" font-size="20" fill="#85857a" textLength="62.7" lengthAdjust="spacingAndGlyphs">Scale 3</text>
<rect x="921" y="1079.0" width="1" height="43" fill="#a4a8a4"/>
<rect x="365" y="1079.0" width="529.1" height="43.3" fill="#000"/>
<text x="644" y="1109.7" font-size="20" fill="#85857a" text-anchor="middle">95 %</text>
<rect x="336" y="1102.3" width="4" height="1.5" fill="#dfe4dc"/>
<text x="950.7" y="1107.5" font-size="13" fill="#e6ebe2" text-anchor="middle">+</text>
<text x="999.2" y="1107.5" font-size="18.5" font-weight="bold" fill="#e6ebe2" text-anchor="middle">?</text>
<text x="228.7" y="1159.0" font-size="20" fill="#85857a" textLength="63.8" lengthAdjust="spacingAndGlyphs">Scale 4</text>
<rect x="921" y="1128.3" width="1" height="43" fill="#a4a8a4"/>
<rect x="365" y="1128.3" width="395.5" height="43.3" fill="#000"/>
<text x="644" y="1159.0" font-size="20" fill="#85857a" text-anchor="middle">71 %</text>
<rect x="336" y="1151.6" width="4" height="1.5" fill="#dfe4dc"/>
<text x="950.7" y="1156.8" font-size="13" fill="#e6ebe2" text-anchor="middle">+</text>
<text x="999.2" y="1156.8" font-size="18.5" font-weight="bold" fill="#e6ebe2" text-anchor="middle">?</text>
<text x="229.8" y="1208.3" font-size="20" fill="#85857a" textLength="62.7" lengthAdjust="spacingAndGlyphs">Scale 5</text>
<rect x="921" y="1177.7" width="1" height="43" fill="#a4a8a4"/>
<rect x="365" y="1177.7" width="272.9" height="43.3" fill="#000"/>
<text x="644" y="1208.3" font-size="20" fill="#85857a" text-anchor="middle">49 %</text>
<rect x="336" y="1200.9" width="4" height="1.5" fill="#dfe4dc"/>
<text x="950.7" y="1206.1" font-size="13" fill="#e6ebe2" text-anchor="middle">+</text>
<text x="999.2" y="1206.1" font-size="18.5" font-weight="bold" fill="#e6ebe2" text-anchor="middle">?</text>
<rect x="1281.5" y="928" width="48.5" height="297" fill="#2a4560"/>
<rect x="1281.5" y="928" width="1" height="297" fill="#22384f"/>
<rect x="1330" y="928" width="563" height="297" fill="#f4f8f3"/>
<rect x="1893" y="928" width="99" height="297" fill="#2a4560"/>
<rect x="1942" y="928" width="1.5" height="297" fill="#1b2d40"/>
<text x="1117.7" y="961.7" font-size="20" fill="#85857a" textLength="142.8" lengthAdjust="spacingAndGlyphs">Grain Dispersion</text>
<rect x="1889" y="931.0" width="1" height="43" fill="#a4a8a4"/>
<rect x="1333" y="931.0" width="126.0" height="43.3" fill="#000"/>
<text x="1612" y="961.7" font-size="20" fill="#85857a" text-anchor="middle">7.8 pixels</text>
<rect x="1304" y="954.3" width="4" height="1.5" fill="#dfe4dc"/>
<text x="1918.7" y="959.5" font-size="13" fill="#e6ebe2" text-anchor="middle">+</text>
<text x="1967.2" y="959.5" font-size="18.5" font-weight="bold" fill="#e6ebe2" text-anchor="middle">?</text>
<text x="1059.8" y="1011.0" font-size="20" fill="#85857a" textLength="200.7" lengthAdjust="spacingAndGlyphs">Non-linear Response &lt;</text>
<rect x="1889" y="980.3" width="1" height="43" fill="#a4a8a4"/>
<rect x="1333" y="980.3" width="242.0" height="43.3" fill="#000"/>
<text x="1612" y="1011.0" font-size="20" fill="#85857a" text-anchor="middle">43.58 %</text>
<rect x="1304" y="1003.6" width="4" height="1.5" fill="#dfe4dc"/>
<text x="1918.7" y="1008.8" font-size="13" fill="#e6ebe2" text-anchor="middle">+</text>
<text x="1967.2" y="1008.8" font-size="18.5" font-weight="bold" fill="#e6ebe2" text-anchor="middle">?</text>
<text x="1063.2" y="1060.3" font-size="20" fill="#85857a" textLength="197.3" lengthAdjust="spacingAndGlyphs">Brightness Detail Loss</text>
<rect x="1889" y="1029.7" width="1" height="43" fill="#a4a8a4"/>
<rect x="1333" y="1029.7" width="67.0" height="43.3" fill="#000"/>
<text x="1612" y="1060.3" font-size="20" fill="#85857a" text-anchor="middle">12 %</text>
<rect x="1304" y="1052.9" width="4" height="1.5" fill="#dfe4dc"/>
<text x="1918.7" y="1058.1" font-size="13" fill="#e6ebe2" text-anchor="middle">+</text>
<text x="1967.2" y="1058.1" font-size="18.5" font-weight="bold" fill="#e6ebe2" text-anchor="middle">?</text>
<text x="1106.4" y="1109.7" font-size="20" fill="#85857a" textLength="154.1" lengthAdjust="spacingAndGlyphs">Color Detail Loss</text>
<rect x="1889" y="1079.0" width="1" height="43" fill="#a4a8a4"/>
<rect x="1333" y="1079.0" width="67.0" height="43.3" fill="#000"/>
<text x="1612" y="1109.7" font-size="20" fill="#85857a" text-anchor="middle">12 %</text>
<rect x="1304" y="1102.3" width="4" height="1.5" fill="#dfe4dc"/>
<text x="1918.7" y="1107.5" font-size="13" fill="#e6ebe2" text-anchor="middle">+</text>
<text x="1967.2" y="1107.5" font-size="18.5" font-weight="bold" fill="#e6ebe2" text-anchor="middle">?</text>
<text x="1105.2" y="1159.0" font-size="20" fill="#85857a" textLength="155.3" lengthAdjust="spacingAndGlyphs">Scale Correlation</text>
<rect x="1889" y="1128.3" width="1" height="43" fill="#a4a8a4"/>
<rect x="1333" y="1128.3" width="557.0" height="43.3" fill="#000"/>
<text x="1612" y="1159.0" font-size="20" fill="#85857a" text-anchor="middle">6</text>
<rect x="1304" y="1151.6" width="4" height="1.5" fill="#dfe4dc"/>
<text x="1918.7" y="1156.8" font-size="13" fill="#e6ebe2" text-anchor="middle">+</text>
<text x="1967.2" y="1156.8" font-size="18.5" font-weight="bold" fill="#e6ebe2" text-anchor="middle">?</text>
<text x="1167.6" y="1208.3" font-size="20" fill="#85857a" textLength="92.9" lengthAdjust="spacingAndGlyphs">Mask Fuzz</text>
<rect x="1889" y="1177.7" width="1" height="43" fill="#a4a8a4"/>
<rect x="1332" y="1177.7" width="1" height="43" fill="#c4c8c4"/>
<text x="1612" y="1208.3" font-size="20" fill="#85857a" text-anchor="middle">1.0 pixels</text>
<rect x="1304" y="1200.9" width="4" height="1.5" fill="#dfe4dc"/>
<text x="1918.7" y="1206.1" font-size="13" fill="#e6ebe2" text-anchor="middle">+</text>
<text x="1967.2" y="1206.1" font-size="18.5" font-weight="bold" fill="#e6ebe2" text-anchor="middle">?</text>
</g>
<rect x="56.5" y="38.5" width="1935" height="1186" rx="5" ry="5" fill="none" stroke="#ffffff" stroke-opacity="0.07" stroke-width="1"/>
</svg></body></html>
